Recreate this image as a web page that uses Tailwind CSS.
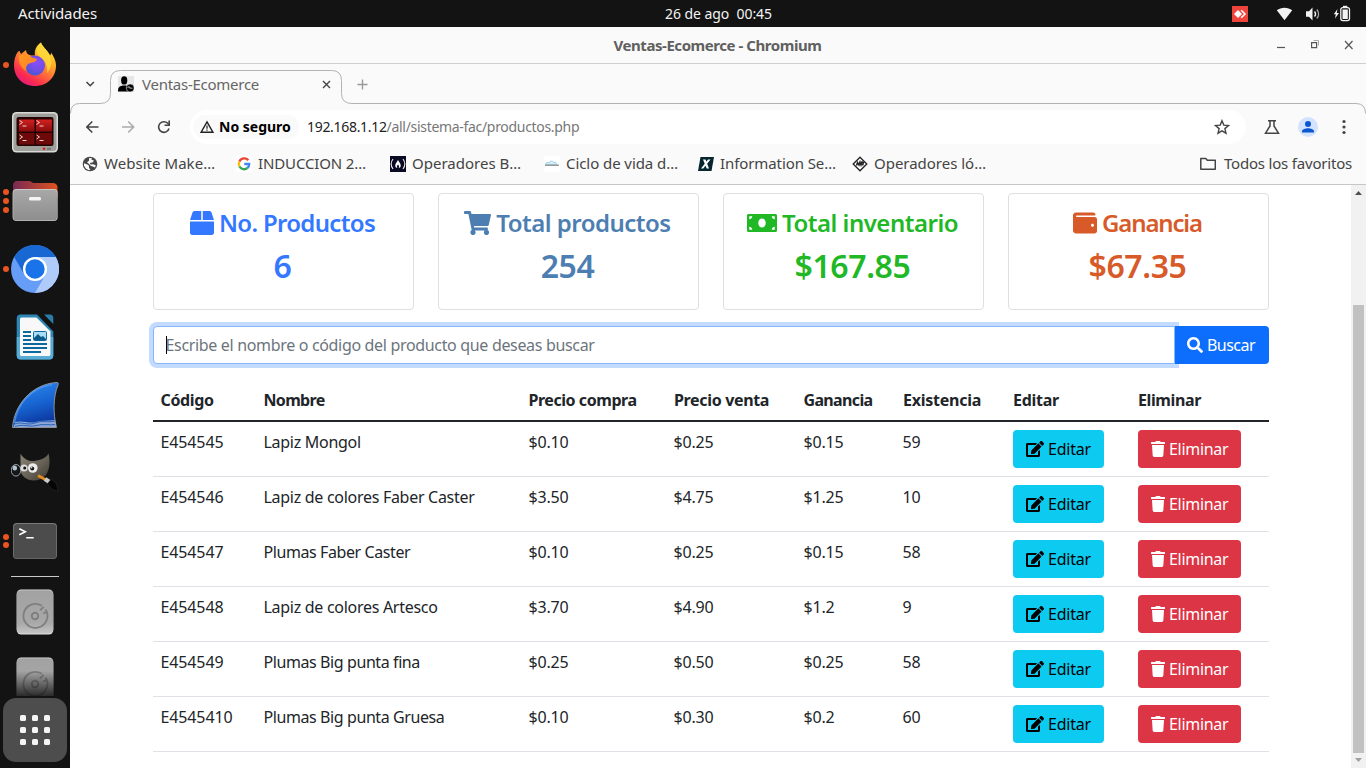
<!DOCTYPE html>
<html lang="es">
<head>
<meta charset="utf-8">
<title>Ventas-Ecomerce</title>
<script src="https://cdn.jsdelivr.net/npm/@tailwindcss/browser@4"></script>
</head>
<body class="h-[768px] w-[1366px] overflow-hidden bg-white font-['Noto_Sans',sans-serif] text-[#212529]">

<!-- shared icons -->
<svg class="hidden">
  <symbol id="i-box" viewBox="0 0 512 512"><path d="M509.5 184.6L458.9 32.8C452.4 13.2 434.1 0 413.4 0H272v192h238.7c-.4-2.5-.4-5-1.2-7.4zM240 0H98.6c-20.7 0-39 13.2-45.5 32.8L2.5 184.6c-.8 2.4-.8 4.9-1.2 7.4H240V0zM0 224v240c0 26.5 21.5 48 48 48h416c26.5 0 48-21.5 48-48V224H0z"/></symbol>
  <symbol id="i-cart" viewBox="0 0 576 512"><path d="M528.12 301.319l47.273-208C578.806 78.301 567.391 64 551.99 64H159.208l-9.166-44.81C147.758 8.021 137.93 0 126.529 0H24C10.745 0 0 10.745 0 24v16c0 13.255 10.745 24 24 24h69.883l70.248 343.435C147.325 417.1 136 435.222 136 456c0 30.928 25.072 56 56 56s56-25.072 56-56c0-15.674-6.447-29.835-16.824-40h209.647C430.447 426.165 424 440.326 424 456c0 30.928 25.072 56 56 56s56-25.072 56-56c0-22.172-12.888-41.332-31.579-50.405l5.517-24.276c3.413-15.018-8.002-29.319-23.403-29.319H218.117l-6.545-32h293.145c11.206 0 20.92-7.754 23.403-18.681z"/></symbol>
  <symbol id="i-money" viewBox="0 0 640 512"><path d="M608 64H32C14.33 64 0 78.33 0 96v320c0 17.67 14.33 32 32 32h576c17.67 0 32-14.33 32-32V96c0-17.67-14.33-32-32-32zM48 400v-64c35.35 0 64 28.65 64 64H48zm0-224v-64h64c0 35.35-28.65 64-64 64zm272 176c-44.19 0-80-42.99-80-96 0-53.02 35.82-96 80-96s80 42.98 80 96c0 53.03-35.83 96-80 96zm272 48h-64c0-35.35 28.65-64 64-64v64zm0-224c-35.35 0-64-28.65-64-64h64v64z"/></symbol>
  <symbol id="i-wallet" viewBox="0 0 512 512"><path d="M461.2 128H80c-8.84 0-16-7.16-16-16s7.16-16 16-16h384c8.84 0 16-7.16 16-16 0-26.51-21.49-48-48-48H64C28.65 32 0 60.65 0 96v320c0 35.35 28.65 64 64 64h397.2c28.02 0 50.8-21.53 50.8-48V176c0-26.47-22.78-48-50.8-48zM416 336c-17.67 0-32-14.33-32-32s14.33-32 32-32 32 14.33 32 32-14.33 32-32 32z"/></symbol>
  <symbol id="i-search" viewBox="0 0 512 512"><path d="M505 442.7L405.3 343c-4.5-4.5-10.6-7-17-7H372c27.6-35.3 44-79.7 44-128C416 93.1 322.9 0 208 0S0 93.1 0 208s93.1 208 208 208c48.3 0 92.7-16.4 128-44v16.3c0 6.4 2.5 12.5 7 17l99.7 99.7c9.4 9.4 24.6 9.4 33.9 0l28.3-28.3c9.4-9.4 9.4-24.6.1-34zM208 336c-70.7 0-128-57.2-128-128 0-70.7 57.2-128 128-128 70.7 0 128 57.2 128 128 0 70.7-57.2 128-128 128z"/></symbol>
  <symbol id="i-edit" viewBox="0 0 576 512"><path d="M402.6 83.2l90.2 90.2c3.8 3.8 3.8 10 0 13.8L274.4 405.6l-92.8 10.3c-12.4 1.4-22.9-9.1-21.5-21.5l10.3-92.8L388.8 83.2c3.8-3.8 10-3.8 13.8 0zm162-22.9l-48.8-48.8c-15.2-15.2-39.9-15.2-55.2 0l-35.4 35.4c-3.8 3.8-3.8 10 0 13.8l90.2 90.2c3.8 3.8 10 3.8 13.8 0l35.4-35.4c15.2-15.3 15.2-40 0-55.2zM384 346.2V448H64V128h229.8c3.2 0 6.2-1.3 8.5-3.5l40-40c7.6-7.6 2.2-20.5-8.5-20.5H48C21.5 64 0 85.5 0 112v352c0 26.5 21.5 48 48 48h352c26.5 0 48-21.5 48-48V306.2c0-10.7-12.9-16-20.5-8.5l-40 40c-2.2 2.3-3.5 5.3-3.5 8.5z"/></symbol>
  <symbol id="i-trash" viewBox="0 0 448 512"><path d="M432 32H312l-9.4-18.7A24 24 0 0 0 281.1 0H166.8a23.72 23.72 0 0 0-21.4 13.3L136 32H16A16 16 0 0 0 0 48v32a16 16 0 0 0 16 16h416a16 16 0 0 0 16-16V48a16 16 0 0 0-16-16zM53.2 467a48 48 0 0 0 47.9 45h245.8a48 48 0 0 0 47.9-45L416 128H32z"/></symbol>
  <symbol id="i-disk" viewBox="0 0 48 48">
    <rect x="5.700" y="1.500" width="36.600" height="45" rx="4.500" fill="#e2e2e2"/><rect x="5.700" y="2.300" width="36.600" height="43.200" rx="4.500" fill="url(#g-disk)"/>
    <g fill="none" stroke="#7f7f7f" stroke-width="1.800"><path d="M34.600 21.500A12 12 0 1 1 30.800 17.700M35.400 24.200l-3.100 1.200M32.600 18.800l-3.600 3.600"/><circle cx="24" cy="28" r="3.200" stroke-width="2"/></g>
  </symbol>
</svg>

<div class="flex h-full flex-col">
  <!-- system bar -->
  <header class="grid h-[27px] shrink-0 grid-cols-[665px_auto_1fr] items-center bg-[#131313] text-[#f2f2f2]">
    <span class="pl-[18px] text-[15px] leading-[27px] tracking-[-0.1px]">Actividades</span>
    <span class="text-[14px] leading-[27px] tracking-[-0.05px] whitespace-pre">26 de ago  00:45</span>
    <div class="flex h-full items-center justify-end">
      <svg class="mr-[28px] h-4 w-4" viewBox="0 0 16 16"><rect width="16" height="16" fill="#ef443b"/><path d="M6 4l4 4-4 4-4-4z" fill="#fff"/><path d="M9.200 4.200L13 8l-3.800 3.800" fill="none" stroke="#fff" stroke-width="1.600"/></svg>
      <svg class="mr-[12px] h-4 w-[17px]" viewBox="0 0 17 16"><path d="M8.500 14.200L.8 4.300C5 .9 12 .9 16.200 4.300z" fill="#f2f2f2"/></svg>
      <svg class="mr-[12px] h-4 w-4" viewBox="0 0 16 16" fill="none" stroke="#f2f2f2"><path d="M1 5.200h3L7.500 1.500v13L4 10.800H1z" fill="#f2f2f2" stroke="none"/><path d="M9.500 5.500a3.500 3.500 0 0 1 0 5" stroke-width="1.500"/><path d="M11.800 3.500a6.500 6.500 0 0 1 0 9" stroke-width="1.200" stroke="#aaa"/></svg>
      <svg class="mr-[15px] h-[17px] w-[18px]" viewBox="0 0 18 17"><path d="M4.500 4L.8 9.300h2L2 13.500l4-5.500H3.800z" fill="#f2f2f2"/><rect x="7.800" y="2.600" width="8.700" height="13" rx="2" fill="none" stroke="#f2f2f2" stroke-width="1.300"/><rect x="9.500" y="4.500" width="5.300" height="9.500" fill="#f2f2f2"/><path d="M10 .8h4.300v1.400H10z" fill="#f2f2f2"/></svg>
    </div>
  </header>

  <div class="flex min-h-0 flex-1">
    <!-- dock -->
    <nav class="flex w-[70px] shrink-0 flex-col overflow-hidden bg-[#131313] pt-1">
      <div class="relative flex h-[68px] shrink-0 items-center justify-center">
        <i class="absolute left-[3px] h-[6px] w-[6px] rounded-full bg-[#e95420]"></i>
        <svg class="h-12 w-12" viewBox="0 0 48 48">
          <defs>
            <linearGradient id="ff1" x1=".85" y1="0" x2=".2" y2="1"><stop offset="0" stop-color="#fff44f"/><stop offset=".3" stop-color="#ffb526"/><stop offset=".55" stop-color="#ff7139"/><stop offset=".8" stop-color="#fb2b4f"/><stop offset="1" stop-color="#e31587"/></linearGradient>
            <radialGradient id="ff2" cx=".6" cy=".35" r=".7"><stop offset="0" stop-color="#8a4cff"/><stop offset=".6" stop-color="#6e4fe0"/><stop offset="1" stop-color="#3a5bd8"/></radialGradient>
            <linearGradient id="ff3" x1="0" y1="0" x2="1" y2="1"><stop offset="0" stop-color="#ff9a1f"/><stop offset="1" stop-color="#ff7a2b"/></linearGradient>
            <linearGradient id="g-disk" x1="0" y1="0" x2="0" y2="1"><stop offset="0" stop-color="#a2a2a2"/><stop offset=".75" stop-color="#a8a8a8"/><stop offset="1" stop-color="#c4c4c4"/></linearGradient>
          </defs>
          <path d="M30 1.500c1 4 7 8 9 13 1-1 1-2 1-3 3 4 5 9 5 13 0 12-9 20.500-21 20.500S3 36.500 3 24.500c0-5 1-10 4-14l1.500-.5L10 13l5-4c0 3 2 5 5 5.500h4C23 10 25 4.500 30 1.500z" fill="url(#ff1)"/>
          <circle cx="24" cy="24.500" r="10" fill="url(#ff2)"/>
          <path d="M8 14.500c5-2 10 .5 13 2l5 1.500c-1 3.500-5 3.500-8 4.500-2.500 1.500-3.500 4-2.500 8C10 27 7 21 8 14.500z" fill="url(#ff3)"/>
          <path d="M30 1.500c1 4 7 8 9 13 3 6 1 13-3 17.500 1-6-1-12-6-15.500-5-3-6.500-9 0-15z" fill="#ffd83a" opacity=".85"/>
        </svg>
      </div>
      <div class="flex h-[68px] shrink-0 items-center justify-center">
        <svg class="h-12 w-12" viewBox="0 0 48 48">
          <defs><linearGradient id="tm" x1="0" y1="0" x2="0" y2="1"><stop offset="0" stop-color="#d22020"/><stop offset="1" stop-color="#8a0c0c"/></linearGradient></defs>
          <rect x="1" y="3" width="46" height="40.500" rx="4.500" fill="#d9d9d6"/><rect x="2.500" y="4.500" width="43" height="37.500" rx="3.500" fill="#9fa09b"/>
          <rect x="5.500" y="8" width="37" height="29" rx="2" fill="#240303"/>
          <g fill="url(#tm)"><rect x="8" y="10.500" width="15.500" height="12"/><rect x="25" y="10.500" width="16" height="12"/></g><g fill="#6d0909"><rect x="8" y="24" width="15.500" height="11.500"/><rect x="25" y="24" width="16" height="11.500"/></g>
          <g fill="none" stroke="#f3d3d3" stroke-width="1"><path d="M8.500 11.500l3 2-3 2M11.500 17h4M25.500 11.500l3 2-3 2M28.500 17h4M8.500 26l3 2-3 2M11.500 31.500h4M25.500 26l3 2-3 2M28.500 31.500h4"/></g>
          <circle cx="33" cy="39.800" r="1.300" fill="#e21b1b"/><rect x="36" y="38.800" width="4" height="2" fill="#777"/>
        </svg>
      </div>
      <div class="relative flex h-[68px] shrink-0 items-center justify-center">
        <div class="absolute left-[3px] flex flex-col gap-[2.700px]"><i class="h-[6px] w-[6px] rounded-full bg-[#e95420]"></i><i class="h-[6px] w-[6px] rounded-full bg-[#e95420]"></i><i class="h-[6px] w-[6px] rounded-full bg-[#e95420]"></i></div>
        <svg class="h-12 w-12" viewBox="0 0 48 48">
          <defs><linearGradient id="fo" x1="0" y1="0" x2="1" y2="0"><stop offset="0" stop-color="#772953"/><stop offset="1" stop-color="#e0531f"/></linearGradient><linearGradient id="fg" x1="0" y1="0" x2="0" y2="1"><stop offset="0" stop-color="#a8a8a8"/><stop offset="1" stop-color="#8e8e8e"/></linearGradient></defs>
          <path d="M2 8c0-2 1.500-4 4-4h12c2 0 3 2 5 2h19c2.500 0 4.500 2 4.500 4v10H2z" fill="url(#fo)"/>
          <rect x="1.600" y="12" width="45" height="32" rx="4" fill="#d4d4d4"/><rect x="2.200" y="12.800" width="43.800" height="30.600" rx="3.500" fill="url(#fg)"/>
          <rect x="18" y="20" width="12" height="3.600" rx="1.500" fill="#f5f5f5"/>
        </svg>
      </div>
      <div class="relative flex h-[68px] shrink-0 items-center justify-center">
        <i class="absolute left-[3px] h-[6px] w-[6px] rounded-full bg-[#e95420]"></i>
        <svg class="h-12 w-12" viewBox="0 0 48 48">
          <circle cx="24" cy="24" r="24" fill="#669df6"/>
          <path d="M24 12h20.800A24 24 0 0 1 24 48l10.400-18z" fill="#aecbfa"/>
          <path d="M3.200 12A24 24 0 0 1 44.800 12H24a12 12 0 0 0-10.400 18z" fill="#1967d2"/>
          <circle cx="24" cy="24" r="12" fill="#fff"/><circle cx="24" cy="24" r="9.700" fill="#1a73e8"/>
        </svg>
      </div>
      <div class="flex h-[68px] shrink-0 items-center justify-center">
        <svg class="h-12 w-12" viewBox="0 0 48 48">
          <path d="M10 1.500h16l16.300 17v24a4 4 0 0 1-4 4H9.700a4 4 0 0 1-4-4v-37a4 4 0 0 1 4-4z" fill="#2e86b5"/><path d="M5.700 24h3.800v19h30V24h2.800v18.500a4 4 0 0 1-4 4H9.700a4 4 0 0 1-4-4z" fill="#57acd3"/>
          <path d="M33 1.500h5.800a3.500 3.500 0 0 1 3.500 3.500v6z" fill="#2a7da9"/>
          <path d="M11 4.500h14.500L39.500 18.500v23a1.500 1.500 0 0 1-1.500 1.500H10.500A1.500 1.500 0 0 1 9 41.500V6a1.500 1.500 0 0 1 1.500-1.500z" fill="#f8f8f8"/>
          <path d="M12 19h8M12 23h8M12 27h8M12 31h24M12 35h24M12 39h18" stroke="#0a6aa0" stroke-width="2"/>
          <rect x="22.500" y="18.500" width="13" height="9" rx="1" fill="#a9dcf5" stroke="#0a6aa0"/><path d="M23 27v-2l4-4 3 3 2-1 3 3v1z" fill="#0a5a8c"/>
        </svg>
      </div>
      <div class="flex h-[68px] shrink-0 items-center justify-center">
        <svg class="h-12 w-12" viewBox="0 0 48 48">
          <defs><linearGradient id="ws" x1=".3" y1="0" x2=".6" y2="1"><stop offset="0" stop-color="#2f86ec"/><stop offset=".5" stop-color="#1663d0"/><stop offset="1" stop-color="#0a2f96"/></linearGradient></defs>
          <path d="M1.500 46.500C3 25 20 3 46 1.500c1.500 0 1.700 1.500 1 2.500-5 12-5 29-1.500 42.500z" fill="url(#ws)" stroke="#8b93a0" stroke-width="1"/>
          <path d="M3.500 42C6 24 19 7 41 3.500" fill="none" stroke="#69b1ff" stroke-width="1.600" opacity=".5"/>
          <path d="M2.500 46l2-5c8-2 13 2 20 0s14-1 19.500-2l1 7z" fill="#e8f1fb" opacity=".6"/>
          <path d="M4 43c7-3 12 2 20-1s13 0 20-2M4 45.500c8-3 14 1 21-1s13 0 19-1" fill="none" stroke="#2863b8" stroke-width="1"/>
        </svg>
      </div>
      <div class="flex h-[68px] shrink-0 items-center justify-center">
        <svg class="h-12 w-12" viewBox="0 0 48 48">
          <defs><linearGradient id="gp" x1="0" y1="0" x2="1" y2="1"><stop offset="0" stop-color="#8a8475"/><stop offset=".5" stop-color="#6b6559"/><stop offset="1" stop-color="#3d3a33"/></linearGradient></defs>
          <path d="M9.500 4.500c2 4 6 7 11 7.500 7 0 14-2 17-7.500 2 8 1 17-3 22-4 4-10 6-16 4.500-7-2-10-8-9-14.500z" fill="url(#gp)"/>
          <ellipse cx="5" cy="21.300" rx="4.800" ry="5.800" fill="#14181b" stroke="#aab2b8" stroke-width=".9"/><ellipse cx="3.800" cy="19" rx="2.300" ry="2.500" fill="#b7c3cc"/>
          <circle cx="13" cy="19" r="3.600" fill="#ddd"/><circle cx="21.800" cy="19" r="4.800" fill="#ececec"/><circle cx="13.700" cy="19" r="1.500" fill="#111"/><circle cx="21.200" cy="19.500" r="2" fill="#111"/><circle cx="20.700" cy="18.800" r=".7" fill="#fff"/>
          <path d="M27 26.500l8 4.500" stroke="#e58a1e" stroke-width="3"/><path d="M34 30l4.500 3" stroke="#c8cacd" stroke-width="4.500"/><path d="M36.500 34.500l3.500-4c5 2 6 4.500 7 12-5-1-8.500-3.500-10.500-8z" fill="#050505" stroke="#2b2b2b" stroke-width=".6"/>
        </svg>
      </div>
      <div class="relative flex h-[68px] shrink-0 items-center justify-center">
        <div class="absolute left-[3px] flex flex-col gap-[2.700px]"><i class="h-[6px] w-[6px] rounded-full bg-[#e95420]"></i><i class="h-[6px] w-[6px] rounded-full bg-[#e95420]"></i></div>
        <svg class="h-12 w-12" viewBox="0 0 48 48">
          <rect x="2" y="6" width="44" height="36" rx="4" fill="#7b7b7b"/><rect x="2.700" y="7" width="42.600" height="34.400" rx="3.500" fill="#4c4c4c"/>
          <path d="M8.300 11.800l6 3-6 3M15.200 20.800h7.500" fill="none" stroke="#fff" stroke-width="1.600"/>
        </svg>
      </div>
      <div class="mx-[11px] mt-[1px] h-px shrink-0 bg-[#c9c9c9]"></div>
      <div class="mt-[1px] flex h-[68px] shrink-0 items-center justify-center"><svg class="h-12 w-12"><use href="#i-disk"/></svg></div>
      <div class="relative flex h-[50px] shrink-0 justify-center overflow-hidden pt-[10px]"><svg class="h-12 w-12 shrink-0"><use href="#i-disk"/></svg><div class="absolute inset-x-0 bottom-0 h-[25px] bg-linear-to-t from-[#131313]/85 to-transparent"></div></div>
      <div class="mx-[3px] mt-[2px] flex h-16 shrink-0 items-center justify-center rounded-[13px] bg-[#4d4d4d]">
        <div class="grid grid-cols-3 gap-[6px]">
          <i class="h-[6px] w-[6px] rounded-[1.500px] bg-[#f5f5f5]"></i><i class="h-[6px] w-[6px] rounded-[1.500px] bg-[#f5f5f5]"></i><i class="h-[6px] w-[6px] rounded-[1.500px] bg-[#f5f5f5]"></i>
          <i class="h-[6px] w-[6px] rounded-[1.500px] bg-[#f5f5f5]"></i><i class="h-[6px] w-[6px] rounded-[1.500px] bg-[#f5f5f5]"></i><i class="h-[6px] w-[6px] rounded-[1.500px] bg-[#f5f5f5]"></i>
          <i class="h-[6px] w-[6px] rounded-[1.500px] bg-[#f5f5f5]"></i><i class="h-[6px] w-[6px] rounded-[1.500px] bg-[#f5f5f5]"></i><i class="h-[6px] w-[6px] rounded-[1.500px] bg-[#f5f5f5]"></i>
        </div>
      </div>
    </nav>

    <!-- browser window -->
    <div class="flex min-w-0 flex-1 flex-col bg-[#fafafa]">
      <div class="relative flex h-[37px] shrink-0 items-center justify-center border-b border-[#cfcfcf]">
        <span class="mr-[1px] text-[15px] leading-9 font-bold tracking-[-0.44px] text-[#606060]">Ventas-Ecomerce - Chromium</span>
        <svg class="absolute top-[10px] right-[13.500px] h-4 w-[76px]" viewBox="0 0 76 16" fill="none" stroke="#555" stroke-width="1.200"><path d="M0 10.500h8"/><path d="M34.600 5.600h5v5h-5z"/><path d="M36.500 3.500h5v5" stroke="#aaa" stroke-width="1"/><path d="M68 4l7.500 8M75.500 4L68 12"/></svg>
      </div>

      <!-- tab strip -->
      <div class="relative flex h-[40px] shrink-0 items-center">
        <svg class="absolute top-0 left-0 h-[50px] w-[1296px]" viewBox="0 0 1296 50" fill="none" stroke="#b3b3b3"><path d="M.5 49.500Q.5 39.500 9.500 39.500H30Q40.500 39.500 40.500 29.500V16.500Q40.500 6.500 50.500 6.500H261.500Q271.500 6.500 271.500 16.500V29.500Q271.500 39.500 282 39.500H1286Q1295.500 39.500 1295.500 49.500"/></svg>
        <svg class="ml-[15px] h-3 w-[10px]" viewBox="0 0 10 12" fill="none" stroke="#444" stroke-width="1.600"><path d="M1.500 4l3.700 3.700L8.900 4"/></svg>
        <svg class="ml-[23px] h-4 w-4" viewBox="0 0 16 16"><rect width="16" height="16" fill="#e6e6e6"/><ellipse cx="6.200" cy="4.400" rx="3.100" ry="4.200"/><path d="M0 15.500c0-4 1-5 4.500-6h3.500c3 1 4 2 4 6z"/><circle cx="12.200" cy="12" r="4" stroke="#e6e6e6" stroke-width=".6"/><path d="M10 12.200a1 1 0 1 1 1.800 0h2.700" fill="none" stroke="#ddd" stroke-width=".8"/></svg>
        <span class="ml-[8px] w-[179px] text-[15px] leading-6 tracking-[-0.26px] text-[#666]">Ventas-Ecomerce</span>
        <svg class="ml-[0.500px] h-[9px] w-[9px]" viewBox="0 0 9 9" stroke="#444" stroke-width="1.400"><path d="M1 1l7 7M8 1L1 8"/></svg>
        <svg class="ml-[26px] h-[11px] w-[11px]" viewBox="0 0 11 11" stroke="#999" stroke-width="1.400"><path d="M5.500.5v10M.5 5.500h10"/></svg>
      </div>

      <!-- toolbar -->
      <div class="flex h-[46px] shrink-0 items-center">
        <svg class="ml-[15px] h-4 w-4" viewBox="0 0 16 16" fill="none" stroke="#444" stroke-width="1.600"><path d="M13.500 8H2M7.300 2.500L1.800 8l5.500 5.500"/></svg>
        <svg class="ml-[20px] h-4 w-4" viewBox="0 0 16 16" fill="none" stroke="#aaa" stroke-width="1.500"><path d="M1 8h11.500M7.200 2.500L12.700 8l-5.500 5.500"/></svg>
        <svg class="ml-[19px] h-4 w-4" viewBox="0 0 16 16" fill="none" stroke="#444" stroke-width="1.600"><path d="M13 9.500a5.300 5.300 0 1 1-1.300-5.200l1.200 1.200"/><path d="M13.200 1.500v4.700H8.500"/></svg>
        <div class="ml-[18px] flex h-[34px] w-[1056px] items-center rounded-full bg-white">
          <div class="ml-[3px] flex h-6 w-[106px] items-center rounded-full bg-[#fafafa] pl-[7px]">
            <svg class="h-[14px] w-[14px]" viewBox="0 0 14 14" fill="none" stroke="#222" stroke-width="1.400"><path d="M7 1.800L13 12.300H1z"/><path d="M7 5.500v3.200M7 9.600v1.200" stroke-width="1.200"/></svg>
            <span class="ml-[5px] text-[14px] leading-6 font-bold text-black">No seguro</span>
          </div>
          <span class="ml-[8px] flex-1 text-[14px] leading-6 tracking-[-0.31px] text-[#777]"><span class="text-[#222]">192.168.1.12</span>/all/sistema-fac/productos.php</span>
          <svg class="mr-[16px] h-4 w-4" viewBox="0 0 16 16" fill="none" stroke="#444" stroke-width="1.400"><path d="M8 1.700l1.800 4.400 4.700.4-3.600 3.100 1.100 4.600L8 11.800l-4 2.400 1.100-4.600L1.500 6.500l4.700-.4z"/></svg>
        </div>
        <svg class="ml-[18px] h-4 w-4" viewBox="0 0 16 16" fill="none" stroke="#444" stroke-width="1.500"><path d="M4 1.800h8M6 2v5l-4.500 7.200h13L10 7V2"/></svg>
        <svg class="ml-[18px] h-5 w-5" viewBox="0 0 20 20"><circle cx="10" cy="10" r="10" fill="#d3e3fd"/><circle cx="10" cy="7" r="3" fill="#0b57d0"/><path d="M4 15.500v-1.300c0-2 3.500-3 6-3s6 1 6 3v1.300z" fill="#0b57d0"/></svg>
        <svg class="ml-[18px] h-4 w-4" viewBox="0 0 16 16" fill="#444"><circle cx="8" cy="2.500" r="1.600"/><circle cx="8" cy="8" r="1.600"/><circle cx="8" cy="13.500" r="1.600"/></svg>
      </div>

      <!-- bookmarks -->
      <div class="flex h-[35px] shrink-0 items-start border-b border-[#c6c6c6] text-[15px] leading-[27px] text-[#444]">
        <div class="ml-[12px] flex w-[154px] items-center"><svg class="mr-[6px] h-4 w-4" viewBox="0 0 16 16"><circle cx="8" cy="8" r="7.300" fill="#474747"/><path d="M2 7.200l4 1.500 1 1.300v2l1.500 1.600L7 14.200 4 12.700 2 9.700zM7 2l3 .3-.5 1.700 2.300.3-.8 2-3 .8.500 1.400 2.500-.2 2.800 1-.8 2.200-2.200-1-1.800-.5L7 8 5 6.300l2-1.500z" fill="#fafafa"/></svg><span class="tracking-[0.04px]">Website Make…</span></div>
        <div class="flex w-[154px] items-center"><svg class="mr-[6px] h-4 w-4" viewBox="0 0 16 16"><rect width="16" height="16" fill="#fff"/><g fill="none" stroke-width="2.300"><path d="M12.300 4.200A5.300 5.300 0 0 0 3.400 5.500" stroke="#ea4335"/><path d="M3.400 5.500a5.300 5.300 0 0 0 0 5" stroke="#fbbc05"/><path d="M3.400 10.500a5.300 5.300 0 0 0 8 1.500" stroke="#34a853"/><path d="M11.400 12A5 5 0 0 0 13.200 8H8.300" stroke="#4285f4"/></g></svg><span class="tracking-[-0.13px]">INDUCCION 2…</span></div>
        <div class="flex w-[154px] items-center"><svg class="mr-[6px] h-4 w-4" viewBox="0 0 16 16"><rect width="16" height="16" fill="#0a0a23"/><g fill="none" stroke="#e8e8ee" stroke-width="1.100"><path d="M3 3C.8 6 .8 10 3 13M13 3c2.200 3 2.200 7 0 10"/></g><path d="M8 4c1 2 3.200 4 2.700 6.200-.3 1-1 1.600-2 1.800.8-1.300.2-2.500-.7-3.500-.9 1-1.500 2.200-.7 3.500-1-.2-1.700-.8-2-1.800C4.800 8 7 6 8 4z" fill="#fff"/></svg><span class="tracking-[0.01px]">Operadores B…</span></div>
        <div class="flex w-[154px] items-center"><svg class="mr-[6px] h-4 w-4" viewBox="0 0 16 16"><rect width="16" height="16" fill="#fff"/><path d="M1.500 8.500c0-2 2.500-2.500 3.500-1.500C6 4.500 9.500 4.700 10 6.800c1.500-.8 3 .2 3 1.700z" fill="#dceff6" stroke="#8fcbe0" stroke-width=".9"/><path d="M1 9.300h14" stroke="#9a9a9a" stroke-width="1.400"/></svg><span class="tracking-[-0.07px]">Ciclo de vida d…</span></div>
        <div class="flex w-[154px] items-center"><svg class="mr-[6px] h-4 w-4" viewBox="0 0 16 16"><path d="M2.500 1H16l-2.500 14H0z" fill="#06262d"/><path d="M5 3.500h2.500L11 12.500H8.700zM12.500 3.500L5.300 12.500H3L10 3.500z" fill="#fff"/></svg><span class="tracking-[-0.09px]">Information Se…</span></div>
        <div class="flex flex-1 items-center"><svg class="mr-[6px] h-4 w-4" viewBox="0 0 16 16"><path d="M8 1.200L14.800 8 8 14.800 1.200 8z" fill="#fff" stroke="#222" stroke-width="1.300"/><path d="M4.500 9.500l1-3 1.500 2.500 1-3 1 3 1-3 1.500.5-1 3" fill="none" stroke="#222" stroke-width="1.500"/></svg><span class="tracking-[-0.02px]">Operadores ló…</span></div>
        <div class="mr-[14px] flex items-center"><svg class="mr-[8px] h-[14px] w-4" viewBox="0 0 16 14" fill="none" stroke="#444" stroke-width="1.500"><path d="M.8 1.500h5l1.500 1.700h8v9H.8z" stroke-linejoin="round"/></svg><span class="tracking-[-0.2px]">Todos los favoritos</span></div>
      </div>

      <!-- page -->
      <div class="flex min-h-0 flex-1 bg-white">
        <main class="ml-[83px] w-[1116px] shrink-0 pt-2">
          <section class="grid grid-cols-4 gap-6 text-center font-semibold">
            <div class="h-[117px] rounded border border-[#dfdfdf] pt-[14px] pr-0.5 text-[#3478ff]">
              <h4 class="flex h-[29px] items-center justify-center gap-[5px] text-2xl leading-[29px] tracking-[-0.68px]"><svg class="h-6 w-6 fill-current"><use href="#i-box"/></svg>No. Productos</h4>
              <h2 class="mt-[10px] text-[32px] leading-[38px] tracking-[-0.5px]">6</h2>
            </div>
            <div class="h-[117px] rounded border border-[#dfdfdf] pt-[14px] pr-0.5 text-[#4d7eb2]">
              <h4 class="flex h-[29px] items-center justify-center gap-[5px] text-2xl leading-[29px] tracking-[-0.52px]"><svg class="h-6 w-[27px] fill-current"><use href="#i-cart"/></svg>Total productos</h4>
              <h2 class="mt-[10px] text-[32px] leading-[38px] tracking-[-0.4px]">254</h2>
            </div>
            <div class="h-[117px] rounded border border-[#dfdfdf] pt-[14px] pr-0.5 text-[#21b825]">
              <h4 class="flex h-[29px] items-center justify-center gap-[5px] text-2xl leading-[29px] tracking-[-0.49px]"><svg class="h-6 w-[30px] fill-current"><use href="#i-money"/></svg>Total inventario</h4>
              <h2 class="mt-[10px] text-[32px] leading-[38px] tracking-[-0.4px]">$167.85</h2>
            </div>
            <div class="h-[117px] rounded border border-[#dfdfdf] pt-[14px] pr-0.5 text-[#d85a28]">
              <h4 class="flex h-[29px] items-center justify-center gap-[5px] text-2xl leading-[29px] tracking-[-1.15px]"><svg class="h-6 w-6 fill-current"><use href="#i-wallet"/></svg>Ganancia</h4>
              <h2 class="mt-[10px] text-[32px] leading-[38px] tracking-[-0.4px]">$67.35</h2>
            </div>
          </section>

          <form class="mt-4 flex h-[38px]">
            <div class="flex w-[1022px] items-center rounded-l border border-[#86b7fe] bg-white pl-3 text-base leading-6 tracking-[-0.33px] text-[#6c757d] shadow-[0_0_0_4px_#c2dbfe]"><i class="h-[18px] w-px bg-black"></i><span class="-ml-[1.500px]">Escribe el nombre o código del producto que deseas buscar</span></div>
            <button type="button" class="relative flex w-[94px] items-center rounded-r bg-[#0d6efd] pl-[12px] text-base leading-6 tracking-[-0.54px] text-white"><svg class="mr-[4px] h-4 w-4 fill-current"><use href="#i-search"/></svg>Buscar</button>
          </form>

          <table class="mt-4 w-[1116px] table-fixed border-collapse text-left text-base leading-6">
            <colgroup><col class="w-[103px]"><col class="w-[265px]"><col class="w-[145px]"><col class="w-[130px]"><col class="w-[99px]"><col class="w-[110px]"><col class="w-[125px]"><col class="w-[139px]"></colgroup>
            <thead>
              <tr class="h-[42px] font-bold shadow-[inset_0_-2px_0_#212529]">
                <th class="px-[7.500px] pb-0.5 tracking-[-0.38px]">Código</th><th class="px-[7.500px] pb-0.5 tracking-[-0.68px]">Nombre</th><th class="px-[7.500px] pb-0.5 tracking-[-0.45px]">Precio compra</th><th class="px-2 pb-0.5 tracking-[-0.34px]">Precio venta</th><th class="px-[7.500px] pb-0.5 tracking-[-0.65px]">Ganancia</th><th class="px-2 pb-0.5 tracking-[-0.25px]">Existencia</th><th class="px-2 pb-0.5 tracking-[-0.26px]">Editar</th><th class="px-2 pb-0.5 tracking-[-0.38px]">Eliminar</th>
              </tr>
            </thead>
            <tbody id="rows"></tbody>
          </table>
        </main>
        <div class="ml-auto flex w-[15px] flex-col items-center bg-[#f1f1f1]">
          <svg class="mt-[6px] h-[4px] w-[7px]" viewBox="0 0 7 4"><path d="M3.500 0L7 4H0z" fill="#505050"/></svg>
          <div class="mt-[110px] w-[11px] flex-1 bg-[#c1c1c1]"></div>
          <svg class="mt-[5px] mb-[6px] h-[4px] w-[7px]" viewBox="0 0 7 4"><path d="M3.500 4L7 0H0z" fill="#a0a0a0"/></svg>
        </div>
      </div>
    </div>
  </div>
</div>

<script>
const productos = [
  ['E454545', 'Lapiz Mongol', '$0.10', '$0.25', '$0.15', '59'],
  ['E454546', 'Lapiz de colores Faber Caster', '$3.50', '$4.75', '$1.25', '10'],
  ['E454547', 'Plumas Faber Caster', '$0.10', '$0.25', '$0.15', '58'],
  ['E454548', 'Lapiz de colores Artesco', '$3.70', '$4.90', '$1.2', '9'],
  ['E454549', 'Plumas Big punta fina', '$0.25', '$0.50', '$0.25', '58'],
  ['E4545410', 'Plumas Big punta Gruesa', '$0.10', '$0.30', '$0.2', '60'],
];
document.getElementById('rows').innerHTML = productos.map(p => `
  <tr class="h-[55px] align-top shadow-[inset_0_-1px_0_#dee2e6]">
    <td class="px-[7.500px] py-2 tracking-[-0.12px]">${p[0]}</td>
    <td class="px-[7.500px] py-2 ${p[1].startsWith('Plumas') ? 'tracking-[-0.41px]' : 'tracking-[-0.29px]'}">${p[1]}</td>
    ${p.slice(2).map(v => `<td class="px-[7.500px] py-2 tracking-[-0.18px]">${v}</td>`).join('')}
    <td class="p-2"><button class="flex h-[38px] w-[91px] items-center rounded bg-[#0dcaf0] pl-[13px] tracking-[-0.2px] text-black"><svg class="mr-[4px] h-4 w-[18px] fill-current"><use href="#i-edit"/></svg>Editar</button></td>
    <td class="p-2"><button class="flex h-[38px] w-[103px] items-center rounded bg-[#dc3545] pl-[13px] tracking-[-0.3px] text-white"><svg class="mr-[4px] h-4 w-[14px] fill-current"><use href="#i-trash"/></svg>Eliminar</button></td>
  </tr>`).join('');
</script>
</body>
</html>
